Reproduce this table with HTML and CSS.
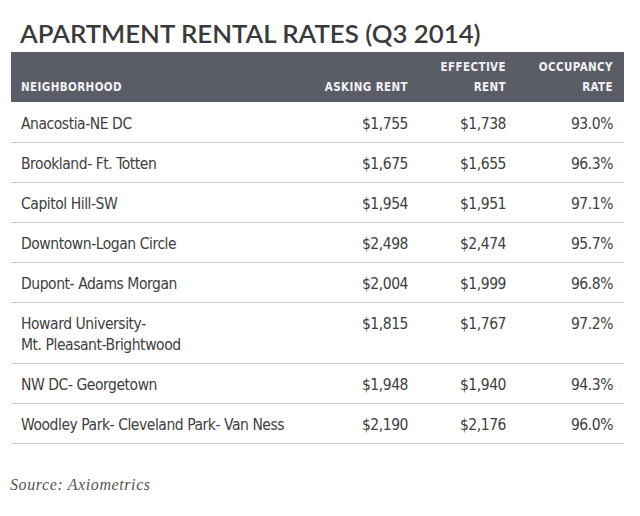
FILE: index.html
```html
<!DOCTYPE html>
<html>
<head>
<meta charset="utf-8">
<link rel="stylesheet" href="styles.css">
</head>
<body>
<div class="page">
  <h1 class="title">APARTMENT RENTAL RATES (Q3 2014)</h1>
  <div class="table">
    <div class="row head">
      <div class="c1">NEIGHBORHOOD</div>
      <div class="num">ASKING RENT</div>
      <div class="num">EFFECTIVE<br>RENT</div>
      <div class="num">OCCUPANCY<br>RATE</div>
    </div>
    <div class="row first">
      <div class="c1">Anacostia-NE DC</div>
      <div class="num">$1,755</div>
      <div class="num">$1,738</div>
      <div class="num">93.0%</div>
    </div>
    <div class="row">
      <div class="c1">Brookland- Ft. Totten</div>
      <div class="num">$1,675</div>
      <div class="num">$1,655</div>
      <div class="num">96.3%</div>
    </div>
    <div class="row">
      <div class="c1">Capitol Hill-SW</div>
      <div class="num">$1,954</div>
      <div class="num">$1,951</div>
      <div class="num">97.1%</div>
    </div>
    <div class="row">
      <div class="c1">Downtown-Logan Circle</div>
      <div class="num">$2,498</div>
      <div class="num">$2,474</div>
      <div class="num">95.7%</div>
    </div>
    <div class="row">
      <div class="c1">Dupont- Adams Morgan</div>
      <div class="num">$2,004</div>
      <div class="num">$1,999</div>
      <div class="num">96.8%</div>
    </div>
    <div class="row">
      <div class="c1">Howard University-<br>Mt. Pleasant-Brightwood</div>
      <div class="num">$1,815</div>
      <div class="num">$1,767</div>
      <div class="num">97.2%</div>
    </div>
    <div class="row">
      <div class="c1">NW DC- Georgetown</div>
      <div class="num">$1,948</div>
      <div class="num">$1,940</div>
      <div class="num">94.3%</div>
    </div>
    <div class="row">
      <div class="c1">Woodley Park- Cleveland Park- Van Ness</div>
      <div class="num">$2,190</div>
      <div class="num">$2,176</div>
      <div class="num">96.0%</div>
    </div>
  </div>
  <p class="source">Source: Axiometrics</p>
</div>
</body>
</html>
```
FILE: styles.css
```css
html, body {
  margin: 0;
  padding: 0;
  background: #ffffff;
}
.page {
  width: 640px;
  height: 516px;
  padding: 0 0 0 11px;
  box-sizing: border-box;
}
.title {
  margin: 0;
  padding: 18px 0 0 9px;
  height: 34px;
  box-sizing: content-box;
  font-family: Lato, "Open Sans", sans-serif;
  font-weight: 600;
  font-size: 25.8px;
  line-height: 30px;
  letter-spacing: 0;
  color: #3a3a3c;
  white-space: nowrap;
}
.table {
  width: 613px;
}
.row {
  display: grid;
  grid-template-columns: 289px 98px 98px 107px;
  padding: 11px 11px 7px 10px;
  border-bottom: 1px solid #cbcbcb;
  font-family: "DejaVu Sans Condensed", "DejaVu Sans", sans-serif;
  font-stretch: condensed;
  font-size: 15.5px;
  letter-spacing: -0.45px;
  line-height: 21px;
  color: #404040;
  white-space: nowrap;
}
.row.first {
  padding-top: 12px;
}
.row.head {
  height: 50px;
  box-sizing: border-box;
  padding: 0 11px 5px 10px;
  align-items: end;
  background: #5b5d66;
  border-bottom: none;
  color: #f2f2f4;
  font-weight: bold;
  font-size: 11.5px;
  line-height: 20px;
  letter-spacing: 0.4px;
}
.num {
  text-align: right;
}
.source {
  margin: 32px 0 0 -1px;
  font-family: "Liberation Serif", serif;
  font-style: italic;
  font-size: 16px;
  letter-spacing: 0.6px;
  color: #555555;
}
```
